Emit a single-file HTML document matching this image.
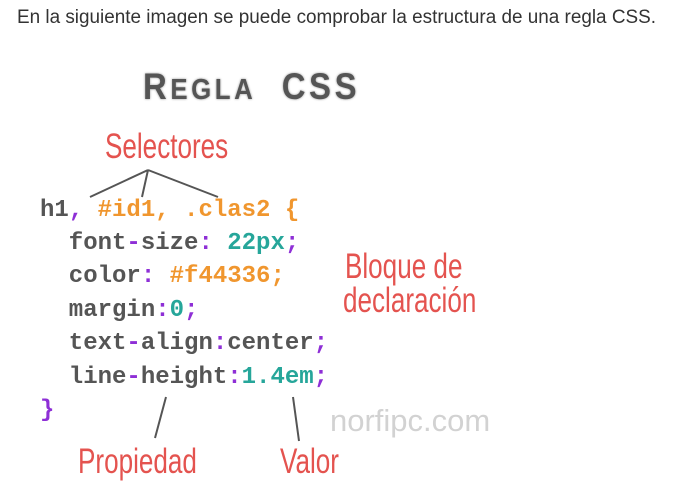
<!DOCTYPE html><html><head><style>
body{margin:0;width:676px;height:492px;background:#fff;position:relative;overflow:hidden}
.t{position:absolute;left:17px;top:7px;font:19px "Liberation Sans",sans-serif;color:#333;transform:scaleX(.995);transform-origin:left top;white-space:nowrap}
.c{position:absolute;font:bold 24px "Liberation Mono",monospace;color:#555;white-space:pre;line-height:1}
.o{color:#f0962e}.p{color:#8e2fd6}.g{color:#26a69a}
.r{position:absolute;font:35px "Liberation Sans",sans-serif;color:#e4534f;transform:scaleX(.745);transform-origin:left top;white-space:nowrap;line-height:1}
.h{position:absolute;left:143px;top:66px;font:bold 37px "Liberation Sans",sans-serif;color:#555;letter-spacing:4px;text-shadow:0 0 3px #bbb,0 0 2px #bbb;transform:scaleX(.89);transform-origin:left top;white-space:nowrap}
.w{position:absolute;left:330px;top:403px;font:31px "Liberation Sans",sans-serif;color:#d2d2d2}
</style></head><body>
<div class="t">En la siguiente imagen se puede comprobar la estructura de una regla CSS.</div>
<div class="h">R<span style="font-size:29px">EGLA</span>&nbsp; CSS</div>
<div class="r" style="left:105px;top:129px">Selectores</div>
<svg style="position:absolute;left:0;top:0" width="676" height="492" stroke="#555" stroke-width="2" fill="none">
<path d="M148 170L90 197M148 170L142 197M148 170L218 197M166 397L155 438M293 397L299 441"/></svg>
<div class="c" style="left:40px;top:199px">h1<span class="p">,</span> <span class="o">#id1, .clas2 {</span></div>
<div class="c" style="left:40px;top:232px">  font<span class="p">-</span>size<span class="p">:</span> <span class="g">22px</span><span class="p">;</span></div>
<div class="c" style="left:40px;top:265px">  color<span class="p">:</span> <span class="o">#f44336;</span></div>
<div class="c" style="left:40px;top:299px">  margin<span class="p">:</span><span class="g">0</span><span class="p">;</span></div>
<div class="c" style="left:40px;top:332px">  text<span class="p">-</span>align<span class="p">:</span>center<span class="p">;</span></div>
<div class="c" style="left:40px;top:366px">  line<span class="p">-</span>height<span class="p">:</span><span class="g">1.4em</span><span class="p">;</span></div>
<div class="c p" style="left:40px;top:399px">}</div>
<div class="r" style="left:345px;top:249px">Bloque de</div>
<div class="r" style="left:343px;top:283px">declaración</div>
<div class="w">norfipc.com</div>
<div class="r" style="left:78px;top:444px">Propiedad</div>
<div class="r" style="left:280px;top:444px">Valor</div>
</body></html>
